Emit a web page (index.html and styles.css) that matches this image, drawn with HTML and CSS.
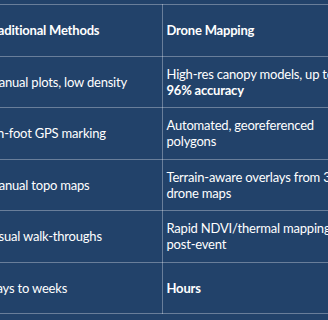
FILE: index.html
```html
<!DOCTYPE html>
<html lang="en">
<head>
<meta charset="utf-8">
<title>Traditional vs Drone Mapping</title>
<link rel="stylesheet" href="styles.css">
</head>
<body>
<div class="viewport">
  <table class="compare">
    <thead>
      <tr>
        <th>Traditional Methods</th>
        <th>Drone Mapping</th>
      </tr>
    </thead>
    <tbody>
      <tr>
        <td>Manual plots, low density</td>
        <td>High-res canopy models, up to<br><strong>96% accuracy</strong></td>
      </tr>
      <tr>
        <td>On-foot GPS marking</td>
        <td>Automated, georeferenced<br>polygons</td>
      </tr>
      <tr>
        <td>Manual topo maps</td>
        <td>Terrain-aware overlays from 3D<br>drone maps</td>
      </tr>
      <tr>
        <td>Visual walk-throughs</td>
        <td>Rapid NDVI/thermal mapping<br>post-event</td>
      </tr>
      <tr>
        <td>Days to weeks</td>
        <td><strong>Hours</strong></td>
      </tr>
    </tbody>
  </table>
</div>
</body>
</html>
```
FILE: styles.css
```css
html, body {
  margin: 0;
  padding: 0;
  background: #22426a;
}
body {
  font-family: Lato, "Liberation Sans", sans-serif;
  color: #ffffff;
  font-size: 13px;
  letter-spacing: -0.2px;
}
.viewport {
  width: 328px;
  height: 320px;
  overflow: hidden;
  padding-top: 4px;
  box-sizing: border-box;
}
.compare {
  border-collapse: collapse;
  margin-left: -18px;
  table-layout: fixed;
  width: 360px;
}
.compare th,
.compare td {
  width: 178px;
  height: 51.5px;
  box-sizing: border-box;
  padding: 0 4px 0 4px;
  border: 1px solid rgba(255, 255, 255, 0.32);
  text-align: left;
  vertical-align: middle;
  line-height: 16px;
  white-space: nowrap;
}
.compare th {
  font-weight: 700;
}
.compare strong {
  font-weight: 700;
}
```
